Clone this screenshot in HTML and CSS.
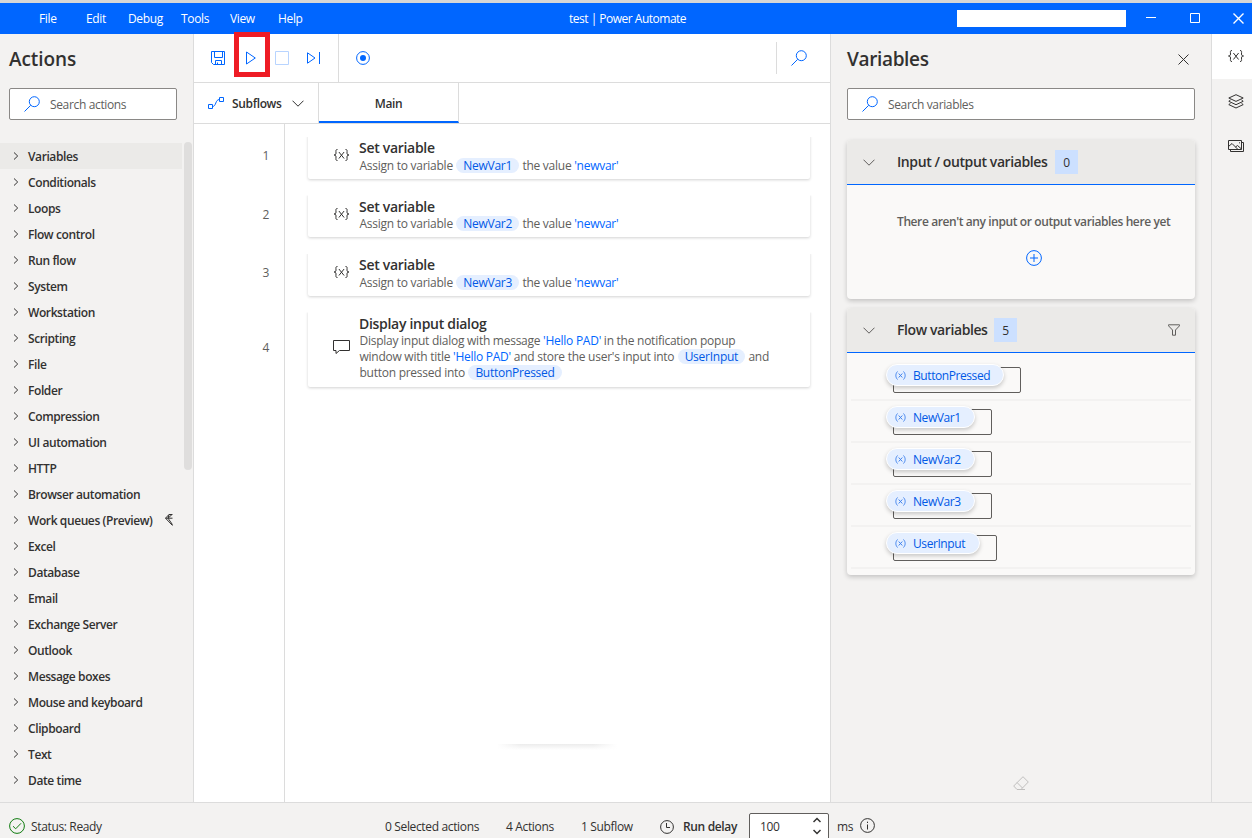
FILE: index.html
```html
<!DOCTYPE html>
<html lang="en">
<head>
  <meta charset="UTF-8">
  <title>test | Power Automate</title>
  <link rel="stylesheet" href="styles.css">
</head>
<body>
  <svg class="sprite">
    <symbol id="search" viewBox="0 0 16 16"><circle cx="10.3" cy="5.7" r="5"/><path d="M6.7 9.3L.5 15.5"/></symbol>
    <symbol id="right" viewBox="0 0 6 8"><path d="M1 .5L4.7 4 1 7.5"/></symbol>
    <symbol id="down" viewBox="0 0 12 7"><path d="M.5 .7L6 6.2 11.5 .7"/></symbol>
    <symbol id="close" viewBox="0 0 11 11"><path d="M.5 .5l10 10M10.5 .5l-10 10"/></symbol>
    <symbol id="braces" viewBox="0 0 16 14"><path d="M4 1.5C1.8 1.5 2.5 3 2.5 5 2.5 6.500 1.8 7 .5 7c1.3 0 2 .5 2 2 0 2-.7 3.500 1.500 3.500M12 1.500c2.200 0 1.500 1.500 1.500 3.500 0 1.500.7 2 2 2-1.300 0-2 .5-2 2 0 2 .7 3.500-1.500 3.500M5.400 4l5.200 6.500M10.600 4l-5.200 6.500"/></symbol>
    <symbol id="var" viewBox="0 0 11 9"><path d="M2.5 .5C.3 3 .3 6 2.5 8.5M8.5 .5c2.2 2.5 2.2 5.5 0 8M3.7 2.5l3.6 4M7.3 2.5l-3.6 4"/></symbol>
  </svg>

  <header class="titlebar">
    <nav class="menu">
      <span class="m-file">File</span>
      <span class="m-edit">Edit</span>
      <span class="m-debug">Debug</span>
      <span class="m-tools">Tools</span>
      <span class="m-view">View</span>
      <span>Help</span>
    </nav>
    <div class="title">test | Power Automate</div>
    <div class="window-buttons">
      <div class="account"></div>
      <svg width="10" height="11" viewBox="0 0 10 11"><path d="M0 4.5h10"/></svg>
      <svg width="10" height="10" viewBox="0 0 10 10"><path d="M.5 .5h9v9h-9z"/></svg>
      <svg class="win-close" width="11" height="11"><use href="#close"/></svg>
    </div>
  </header>

  <main>
    <aside class="actions">
      <h1>Actions</h1>
      <div class="search">
        <svg class="blue" width="16" height="16"><use href="#search"/></svg>
        <span>Search actions</span>
      </div>
      <div class="action-scroll">
        <ul class="action-list">
          <li class="selected"><svg><use href="#right"/></svg>Variables</li>
          <li><svg><use href="#right"/></svg>Conditionals</li>
          <li><svg><use href="#right"/></svg>Loops</li>
          <li><svg><use href="#right"/></svg>Flow control</li>
          <li><svg><use href="#right"/></svg>Run flow</li>
          <li><svg><use href="#right"/></svg>System</li>
          <li><svg><use href="#right"/></svg>Workstation</li>
          <li><svg><use href="#right"/></svg>Scripting</li>
          <li><svg><use href="#right"/></svg>File</li>
          <li><svg><use href="#right"/></svg>Folder</li>
          <li><svg><use href="#right"/></svg>Compression</li>
          <li><svg><use href="#right"/></svg>UI automation</li>
          <li><svg><use href="#right"/></svg>HTTP</li>
          <li><svg><use href="#right"/></svg>Browser automation</li>
          <li><svg><use href="#right"/></svg>Work queues (Preview)
            <svg class="premium" viewBox="0 0 8 12"><path d="M7.5 .5H4L.5 4.2 7.5 11.5M.5 4.2h7M4 .5L3 4.2l4.5 6.5M7 .5L3 4.2"/></svg>
          </li>
          <li><svg><use href="#right"/></svg>Excel</li>
          <li><svg><use href="#right"/></svg>Database</li>
          <li><svg><use href="#right"/></svg>Email</li>
          <li><svg><use href="#right"/></svg>Exchange Server</li>
          <li><svg><use href="#right"/></svg>Outlook</li>
          <li><svg><use href="#right"/></svg>Message boxes</li>
          <li><svg><use href="#right"/></svg>Mouse and keyboard</li>
          <li><svg><use href="#right"/></svg>Clipboard</li>
          <li><svg><use href="#right"/></svg>Text</li>
          <li><svg><use href="#right"/></svg>Date time</li>
        </ul>
        <div class="scrollbar"></div>
      </div>
    </aside>

    <section class="designer">
      <div class="toolbar">
        <svg class="save" width="14" height="14" viewBox="0 0 14 14"><path d="M.5 .5h13v13H2.5l-2-2zM3.5 .5v6h8v-6M4.5 13.5v-4h6v4M6.5 11.5v2"/></svg>
        <div class="run"><svg width="10" height="14" viewBox="0 0 10 14"><path d="M.5 1v12L9.3 7z"/></svg></div>
        <svg class="stop" width="14" height="14" viewBox="0 0 14 14"><path d="M.5 .5h13v13H.5z"/></svg>
        <svg class="step" width="13" height="12" viewBox="0 0 13 12"><path d="M.5 .8v10.4L8 6zM12.5 0v12"/></svg>
        <div class="record"><svg width="14" height="14" viewBox="0 0 14 14"><circle cx="7" cy="7" r="6.4"/><circle class="dot" cx="7" cy="7" r="3"/></svg></div>
        <div class="find"><svg width="16" height="16"><use href="#search"/></svg></div>
      </div>
      <div class="tabs">
        <div class="subflows">
          <svg class="blue" width="16" height="12" viewBox="0 0 16 12"><path d="M.5 7.5h4v4h-4zM11.5 .5h4v4h-4zM4.5 9.5C8.5 9.5 7 2.5 11.5 2.5"/></svg>
          <span>Subflows</span>
          <svg width="12" height="7"><use href="#down"/></svg>
        </div>
        <div class="tab">Main</div>
      </div>
      <div class="flow">
        <div class="gutter">
          <div>1</div>
          <div>2</div>
          <div>3</div>
          <div class="tall">4</div>
        </div>
        <div class="steps">
          <div class="card">
            <svg width="16" height="14"><use href="#braces"/></svg>
            <div>
              <h3>Set variable</h3>
              <p>Assign to variable <b>NewVar1</b> the value <i>'newvar'</i></p>
            </div>
          </div>
          <div class="card">
            <svg width="16" height="14"><use href="#braces"/></svg>
            <div>
              <h3>Set variable</h3>
              <p>Assign to variable <b>NewVar2</b> the value <i>'newvar'</i></p>
            </div>
          </div>
          <div class="card">
            <svg width="16" height="14"><use href="#braces"/></svg>
            <div>
              <h3>Set variable</h3>
              <p>Assign to variable <b>NewVar3</b> the value <i>'newvar'</i></p>
            </div>
          </div>
          <div class="card dialog">
            <svg width="17" height="15" viewBox="0 0 17 15"><path d="M.5 .5h16v10H6.5L3 13.500v-3H.5z"/></svg>
            <div>
              <h3>Display input dialog</h3>
              <p>Display input dialog with message <i>'Hello PAD'</i> in the notification popup</p>
              <p>window with title <i>'Hello PAD'</i> and store the user's input into <b>UserInput</b> and</p>
              <p>button pressed into <b>ButtonPressed</b></p>
            </div>
          </div>
          <div class="shade"></div>
        </div>
      </div>
    </section>

    <aside class="variables">
      <div class="panel-head">
        <h1>Variables</h1>
        <svg width="11" height="11"><use href="#close"/></svg>
      </div>
      <div class="search">
        <svg class="blue" width="16" height="16"><use href="#search"/></svg>
        <span>Search variables</span>
      </div>
      <div class="group io">
        <div class="group-head">
          <svg width="12" height="7"><use href="#down"/></svg>
          <h2>Input / output variables</h2>
          <span class="count">0</span>
        </div>
        <div class="group-body empty">
          <p>There aren't any input or output variables here yet</p>
          <svg class="blue" width="16" height="16" viewBox="0 0 16 16"><circle cx="8" cy="8" r="7.4"/><path d="M4 8h8M8 4v8"/></svg>
        </div>
      </div>
      <div class="group">
        <div class="group-head">
          <svg width="12" height="7"><use href="#down"/></svg>
          <h2 class="flow-title">Flow variables</h2>
          <span class="count">5</span>
          <svg class="filter" width="12" height="12" viewBox="0 0 12 12"><path d="M.5 .8h11v1L7.5 6v5.2h-3V6L.5 1.8z"/></svg>
        </div>
        <div class="group-body var-list">
          <div class="var-row"><div class="value w-button"><span class="pill"><svg width="11" height="9"><use href="#var"/></svg><span>ButtonPressed</span></span></div></div>
          <div class="var-row"><div class="value"><span class="pill"><svg width="11" height="9"><use href="#var"/></svg><span>NewVar1</span></span></div></div>
          <div class="var-row"><div class="value"><span class="pill"><svg width="11" height="9"><use href="#var"/></svg><span>NewVar2</span></span></div></div>
          <div class="var-row"><div class="value"><span class="pill"><svg width="11" height="9"><use href="#var"/></svg><span>NewVar3</span></span></div></div>
          <div class="var-row"><div class="value w-input"><span class="pill"><svg width="11" height="9"><use href="#var"/></svg><span>UserInput</span></span></div></div>
        </div>
      </div>
      <svg class="eraser" width="16" height="15" viewBox="0 0 16 15"><path d="M10 .7l5.3 5.3L8 13.5H4L.7 10zM4 6.5l5.5 5.5M4 13.5h8"/></svg>
    </aside>

    <nav class="rail">
      <div class="active"><svg width="16" height="14"><use href="#braces"/></svg></div>
      <div><svg width="16" height="15" viewBox="0 0 16 15"><path d="M8 .7L15.2 4 8 7.4.8 4zM2.5 6L.8 7.3 8 10.7l7.2-3.4L13.5 6M2.5 9.3L.8 10.6 8 14l7.2-3.4-1.7-1.3"/></svg></div>
      <div><svg width="16" height="12" viewBox="0 0 16 12"><path d="M.5 .5h13v9H.5zM13.5 2.5h2v9h-13v-2M.5 6.5l3.5-3L9.5 9M7.5 7l2-1.5 4 3.5M11 2.8h1"/></svg></div>
    </nav>
  </main>

  <footer>
    <div class="status">
      <svg class="ok" width="16" height="16" viewBox="0 0 16 16"><circle cx="8" cy="8" r="7.4"/><path d="M4 8.2l2.7 2.6L12 5.3"/></svg>
      <span>Status: Ready</span>
    </div>
    <span class="f-selected">0 Selected actions</span>
    <span class="f-actions">4 Actions</span>
    <span class="f-subflow">1 Subflow</span>
    <svg class="clock" width="14" height="14" viewBox="0 0 14 14"><circle cx="7" cy="7" r="6.4"/><path d="M6.5 3v4.5H10"/></svg>
    <span class="f-delay">Run delay</span>
    <div class="delay">
      <span>100</span>
      <svg width="8" height="18" viewBox="0 0 8 18"><path d="M.5 5L4 1.5 7.5 5M.5 13L4 16.5 7.5 13"/></svg>
    </div>
    <span class="ms">ms</span>
    <svg class="info" width="15" height="15" viewBox="0 0 15 15"><circle cx="7.5" cy="7.5" r="6.9"/><path d="M7.5 6.5v5M7.5 3.7v1.3"/></svg>
  </footer>
</body>
</html>
```
FILE: styles.css
```css
* {
  box-sizing: border-box;
}

body {
  margin: 0;
  width: 1252px;
  height: 838px;
  overflow: hidden;
  display: flex;
  flex-direction: column;
  border-top: 3px solid #d6d6d6;
  background-color: #f3f2f1;
  color: #323130;
  font-family: "Open Sans", "Noto Sans", sans-serif;
  font-size: 12px;
  letter-spacing: -0.35px;
  line-height: 16px;
}

h1, h2, h3, p, ul {
  margin: 0;
  padding: 0;
}

h1 {
  font-size: 19px;
  font-weight: 600;
  line-height: 26px;
}

h2 {
  font-size: 14px;
  font-weight: 600;
  letter-spacing: -0.4px;
}

svg {
  display: block;
  flex: none;
  fill: none;
  stroke: #323130;
  stroke-width: 1;
}

.sprite {
  display: none;
}

.blue {
  stroke: #0066ff;
}

/* title bar */
.titlebar {
  display: flex;
  flex: none;
  align-items: center;
  height: 31px;
  background-color: #0066ff;
  color: #fff;
}

.menu {
  display: flex;
  width: 569px;
  padding: 1px 0 0 39px;
}

.m-file { width: 47px; }
.m-edit { width: 42px; }
.m-debug { width: 53px; }
.m-tools { width: 49px; }
.m-view { width: 48px; }

.title {
  width: 388px;
  padding-top: 1px;
  letter-spacing: -0.5px;
}

.window-buttons {
  display: flex;
  align-items: center;
}

.window-buttons svg {
  stroke: #fff;
  margin: -1px 34px 0 0;
}

.window-buttons .win-close {
  margin: -1px 0 0 -1px;
  stroke-width: 1.4;
}

.account {
  width: 169px;
  height: 17px;
  margin-right: 20px;
  background-color: #fff;
}

main {
  display: flex;
  flex: none;
  height: 768px;
}

/* actions panel */
.actions {
  width: 194px;
  border-right: 1px solid #dcdcdc;
}

.actions h1 {
  padding: 12px 0 0 9px;
  letter-spacing: -0.1px;
}

.search {
  display: flex;
  flex: none;
  align-items: center;
  gap: 10px;
  height: 32px;
  padding-left: 14px;
  border: 1px solid #8a8886;
  border-radius: 2px;
  background-color: #fff;
  color: #605e5c;
}

.search span {
  padding-top: 2px;
}

.actions .search {
  width: 168px;
  margin: 16px 0 0 9px;
}

.action-scroll {
  display: flex;
  margin-top: 22px;
  gap: 2px;
}

.action-list {
  width: 182px;
  margin-top: 1px;
  list-style: none;
  font-weight: 600;
  letter-spacing: -0.4px;
}

.action-list li {
  display: flex;
  align-items: center;
  height: 26px;
  padding: 2px 0 0 13px;
}

.action-list svg {
  width: 6px;
  height: 8px;
  margin: -2px 9px 0 0;
}

.action-list .premium {
  width: 8px;
  height: 12px;
  margin: -2px 0 0 13px;
}

.action-list .selected {
  background-color: #ebeae8;
}

.scrollbar {
  width: 8px;
  height: 328px;
  border-radius: 4px;
  background-color: #dfdedd;
}

/* flow designer */
.designer {
  display: flex;
  flex-direction: column;
  width: 637px;
  border-right: 1px solid #dcdcdc;
  background-color: #fff;
}

.toolbar {
  display: flex;
  align-items: center;
  height: 49px;
  padding-left: 17px;
  border-bottom: 1px solid #dcdcdc;
}

.toolbar svg {
  stroke: #0066ff;
}

.toolbar .dot {
  fill: #0066ff;
  stroke: none;
}

.run {
  display: flex;
  align-items: center;
  width: 36px;
  height: 45px;
  margin: -7px 5px 0 9px;
  padding: 7px 0 0 7px;
  border: 5px solid #ee1c25;
}

.toolbar .stop {
  stroke: #b8d4ff;
}

.step {
  margin: 0 18px;
}

.record {
  display: flex;
  align-items: center;
  width: 438px;
  height: 48px;
  padding-left: 17px;
  border-left: 1px solid #dcdcdc;
}

.find {
  display: flex;
  align-items: center;
  height: 32px;
  padding-left: 14px;
  border-left: 1px solid #dcdcdc;
}

.tabs {
  display: flex;
  height: 41px;
  border-bottom: 1px solid #dcdcdc;
  font-weight: 600;
}

.subflows {
  display: flex;
  align-items: center;
  width: 125px;
  padding-left: 14px;
  border-right: 1px solid #dcdcdc;
}

.subflows span {
  width: 60px;
  margin-left: 8px;
  padding-top: 2px;
}

.tab {
  width: 140px;
  border-right: 1px solid #dcdcdc;
  border-bottom: 2px solid #0066ff;
  line-height: 42px;
  text-align: center;
}

.flow {
  display: flex;
  flex: 1;
}

.gutter {
  width: 91px;
  padding: 10px 15px 0 0;
  border-right: 1px solid #dcdcdc;
  color: #605e5c;
  text-align: right;
}

.gutter div {
  height: 58.5px;
  line-height: 43px;
}

.gutter .tall {
  line-height: 76px;
}

.steps {
  display: flex;
  flex-direction: column;
  gap: 14px;
  width: 525px;
  padding: 10px 0 0 23px;
}

.card {
  display: flex;
  flex: none;
  height: 44.5px;
  padding: 5px 0 0 25px;
  border-radius: 2px;
  box-shadow: 0 1px 3px rgba(0, 0, 0, 0.18);
  clip-path: inset(3px -3px -5px -3px);
  color: #605e5c;
}

.card > svg {
  width: 17px;
  margin: 9px 9px 0 0;
}

.card.dialog {
  height: 77px;
}

.dialog > svg {
  margin-top: 25px;
}

.card h3 {
  color: #323130;
  font-size: 14px;
  font-weight: 600;
  line-height: 18px;
  letter-spacing: -0.3px;
}

.card p {
  padding-left: 0.5px;
  letter-spacing: -0.26px;
  white-space: nowrap;
}

.card p:nth-of-type(1) {
  margin-top: 0.5px;
}

.card b {
  display: inline-block;
  margin: 0 0.5px;
  padding: 0 7px;
  border-radius: 8px;
  background-color: #e5efff;
  color: #0058e6;
  font-weight: 400;
  line-height: 15px;
}

.card i {
  color: #0066ff;
  font-style: normal;
}

.shade {
  width: 120px;
  height: 6px;
  margin: 343px 0 0 189px;
  background: linear-gradient(to right, #fff, transparent 20%, transparent 80%, #fff), linear-gradient(#ececec, #fff);
}

/* variables panel */
.variables {
  display: flex;
  flex-direction: column;
  width: 380px;
  padding: 12px 16px 0;
}

.panel-head {
  display: flex;
  align-items: center;
  justify-content: space-between;
  padding-right: 6px;
}

.variables .search {
  margin: 16px 0 20px;
}

.group {
  border-radius: 4px;
  background-color: #faf9f8;
  box-shadow: 0 2px 5px rgba(0, 0, 0, 0.2);
}

.io {
  height: 159px;
  margin-bottom: 9px;
}

.group-head {
  display: flex;
  align-items: center;
  height: 44px;
  padding: 0 15px 0 16px;
  border-radius: 4px 4px 0 0;
  background-color: #ebeae8;
}

.group-head svg {
  stroke: #605e5c;
}

.group-head h2 {
  width: 158px;
  margin-left: 22px;
  white-space: nowrap;
}

.group-head .flow-title {
  width: 97px;
}

.count {
  width: 23px;
  height: 24px;
  background-color: #cce0ff;
  line-height: 25px;
  text-align: center;
}

.filter {
  margin-left: auto;
}

.group-body {
  border-top: 1px solid #0066ff;
}

.empty {
  padding: 29px 0 0 50px;
  color: #605e5c;
  font-weight: 600;
  letter-spacing: -0.4px;
}

.empty svg {
  margin: 20px 0 0 129px;
}

.var-list {
  padding: 6px 4px;
}

.var-row {
  height: 42px;
  padding: 8px 0 0 42px;
  border-bottom: 2px solid #f3f2f1;
}

.value {
  position: relative;
  width: 99px;
  height: 26px;
  border: 1px solid #605e5c;
  border-radius: 2px;
}

.w-button {
  width: 128px;
}

.w-input {
  width: 104px;
}

/* name badge lies over the corner of the value box */
.pill {
  position: absolute;
  top: -4px;
  left: -8px;
  right: 16px;
  display: flex;
  align-items: center;
  gap: 7px;
  height: 22px;
  padding-left: 8px;
  border: 1px solid #fff;
  border-radius: 11px;
  background-color: #e5efff;
  box-shadow: 0 2px 4px rgba(0, 0, 0, 0.2);
  color: #0058e6;
  letter-spacing: -0.42px;
}

.pill span {
  padding-top: 2px;
}

.pill svg {
  stroke: #3f82ee;
}

.eraser {
  margin: auto 0 11px 166px;
  stroke: #c0bfbe;
}

/* right rail */
.rail {
  width: 41px;
  border-left: 1px solid #dcdcdc;
}

.rail div {
  display: flex;
  align-items: center;
  height: 45px;
  padding: 0 0 1px 16px;
}

.rail .active {
  background-color: #fff;
}

/* status bar */
footer {
  display: flex;
  flex: none;
  align-items: center;
  height: 48px;
  border-top: 1px solid #dcdcdc;
}

.status {
  display: flex;
  align-items: center;
  gap: 6px;
  width: 385px;
  padding-left: 9px;
}

.ok {
  margin-top: -2px;
  stroke: #107c10;
}

.f-selected { width: 121px; }
.f-actions { width: 75px; }
.f-subflow { width: 79px; }

.clock {
  margin-right: 9px;
}

.f-delay {
  width: 66px;
  font-weight: 600;
}

.delay {
  display: flex;
  justify-content: space-between;
  align-items: center;
  width: 80px;
  height: 28px;
  padding: 0 7px 0 10px;
  border: 1px solid #605e5c;
  border-radius: 2px;
  background-color: #fff;
}

.delay svg {
  margin-top: -2px;
  stroke-width: 1.5;
}

.ms {
  width: 23px;
  margin-left: 8px;
}

.info {
  margin-top: -2px;
}
```
